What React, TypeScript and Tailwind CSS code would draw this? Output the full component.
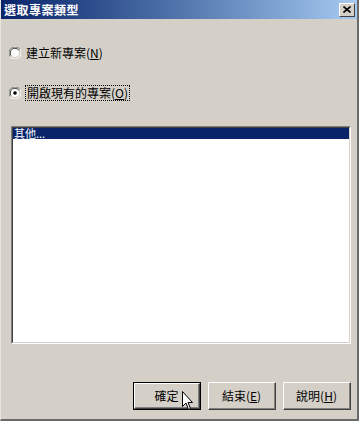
import React from "react";

const font = { fontFamily: '"Noto Sans CJK TC", "Noto Sans CJK SC", "Liberation Sans", sans-serif' };

function Radio({ checked }: { checked?: boolean }) {
  return (
    <div className="relative w-[12px] h-[12px] shrink-0">
      <svg width="12" height="12" viewBox="0 0 12 12" className="absolute inset-0">
        <path d="M11 2.5 A5.5 5.5 0 0 0 1 9.5" fill="none" stroke="#808080" strokeWidth="1" />
        <path d="M10 3.5 A4.3 4.3 0 0 0 2 8.5" fill="none" stroke="#404040" strokeWidth="1" />
        <path d="M1 9.5 A5.5 5.5 0 0 0 11 2.5" fill="none" stroke="#ffffff" strokeWidth="1" />
        <circle cx="6" cy="6" r="4" fill="#ffffff" />
        {checked && <circle cx="6" cy="6" r="1.8" fill="#000" />}
      </svg>
    </div>
  );
}

function Btn({ label, acc, def }: { label: string; acc?: string; def?: boolean }) {
  return (
    <div className={`w-[68px] h-[28px] ${def ? "border border-black" : ""}`}>
      <div className="w-full h-full border-t border-l border-t-white border-l-white border-b border-r border-b-[#404040] border-r-[#404040]">
        <div className="w-full h-full border-b border-r border-b-[#808080] border-r-[#808080] flex items-center justify-center text-[12px] text-black leading-none">
          {label}
          {acc && (
            <span>
              (<span className="underline">{acc}</span>)
            </span>
          )}
        </div>
      </div>
    </div>
  );
}

export default function App() {
  return (
    <div className="w-[359px] h-[421px] bg-[#d4d0c8] flex flex-col relative overflow-hidden border-l border-l-[#e8e6e1] border-r-2 border-r-[#6a6a6a] border-b-2 border-b-[#6a6a6a]" style={font}>
      <div className="h-[19px] shrink-0 flex items-center justify-between pl-[3px] pr-[3px] bg-gradient-to-r from-[#0a246a] to-[#a6caf0]">
        <span className="text-white font-bold text-[12px] leading-none tracking-[0.5px]">選取專案類型</span>
        <div className="w-[16px] h-[14px] bg-[#d4d0c8] border-t border-l border-t-white border-l-white border-b border-r border-b-[#404040] border-r-[#404040] flex items-center justify-center mr-[-1px]">
          <svg width="8" height="7" viewBox="0 0 8 7">
            <path d="M0.5 0.5 L7.5 6.5 M7.5 0.5 L0.5 6.5" stroke="#000" strokeWidth="1.6" />
          </svg>
        </div>
      </div>

      <div className="flex flex-col flex-1 pl-[8px] pr-[6px]">
        <div className="flex items-center gap-[5px] mt-[27px] h-[14px]">
          <Radio />
          <span className="text-[12px] leading-none text-black">
            建立新專案(<span className="underline">N</span>)
          </span>
        </div>
        <div className="flex items-center gap-[4px] mt-[26px] h-[14px]">
          <Radio checked />
          <span className="text-[12px] leading-none text-black border border-dotted border-black px-[1px] py-[1px]">
            開啟現有的專案(<span className="underline">O</span>)
          </span>
        </div>

        <div className="mt-[26px] ml-[2px] w-[340px] h-[218px] border-t border-l border-t-[#808080] border-l-[#808080] border-b border-r border-b-white border-r-white">
          <div className="w-full h-full border-t border-l border-t-[#404040] border-l-[#404040] border-b border-r border-b-[#d4d0c8] border-r-[#d4d0c8] bg-white">
            <div className="h-[11px] bg-[#0a246a] text-white text-[11px] leading-[11px] pl-[1px]">其他...</div>
          </div>
        </div>

        <div className="flex justify-end gap-[7px] mt-[38px] pr-[0px]">
          <Btn label="確定" def />
          <Btn label="結束" acc="E" />
          <Btn label="說明" acc="H" />
        </div>
      </div>

      <svg className="absolute left-[181px] top-[391px]" width="12" height="20" viewBox="0 0 12 20">
        <path d="M0.5 0.5 L0.5 15.5 L4 12 L6.5 18.5 L8.5 17.5 L6 11.5 L10.5 11.5 Z" fill="#fff" stroke="#000" strokeWidth="1" />
      </svg>
    </div>
  );
}
